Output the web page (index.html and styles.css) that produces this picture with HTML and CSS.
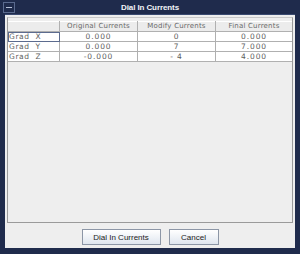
FILE: index.html
```html
<html>
<head>
	<title>Dial In Currents</title>
<link rel="stylesheet" href="styles.css">
</head>
<body>

	<div class="window">
		<div class="titlebar">
			<div class="closebox"><span></span></div>
			<div class="title">Dial In Currents</div>
		</div>

		<div class="content">
			<div class="panel">
				<table class="grid">
					<tr class="head">
						<th class="c0"></th>
						<th class="c1">Original Currents</th>
						<th class="c2">Modify Currents</th>
						<th class="c3">Final Currents</th>
					</tr>
					<tr>
						<td class="name focus">Grad&nbsp; X</td>
						<td>0.000</td>
						<td>0</td>
						<td>0.000</td>
					</tr>
					<tr>
						<td class="name">Grad&nbsp; Y</td>
						<td>0.000</td>
						<td>7</td>
						<td>7.000</td>
					</tr>
					<tr>
						<td class="name">Grad&nbsp; Z</td>
						<td>-0.000</td>
						<td>- 4</td>
						<td>4.000</td>
					</tr>
				</table>
			</div>

			<div class="buttons">
				<button class="dial">Dial In Currents</button>
				<button class="cancel">Cancel</button>
			</div>
		</div>
	</div>

</body>
</html>
```

FILE: styles.css
```css
body {
	margin: 0;
	font-family: "DejaVu Sans", sans-serif;
	background: #1e2a4a;
}

.window {
	width: 300px;
	height: 254px;
	box-sizing: border-box;
	background: #1f2b4c;
	padding: 0 5px 6px 5px;
	display: flex;
	flex-direction: column;
}

.titlebar {
	height: 14px;
	position: relative;
	display: flex;
	align-items: center;
	justify-content: center;
	border-bottom: 1px solid #3a4a70;
}

.closebox {
	position: absolute;
	left: -2px;
	top: 2px;
	width: 10px;
	height: 9px;
	border: 1px solid #5a6a8e;
	display: flex;
	align-items: center;
	justify-content: center;
}

.closebox span {
	display: block;
	width: 6px;
	height: 1px;
	background: #b8c2d8;
}

.title {
	color: #f2f4f8;
	font-family: "Liberation Sans", sans-serif;
	font-weight: bold;
	font-size: 8px;
	letter-spacing: -0.1px;
}

.content {
	flex: 1;
	background: #eeeeee;
	display: flex;
	flex-direction: column;
	padding: 2px 2px 0 2px;
}

.panel {
	height: 206px;
	border: 1px solid #9a9a9a;
	border-top-color: #c8c8c8;
	background: #eeeeee;
	padding-top: 3px;
	box-sizing: border-box;
}

.grid {
	border-collapse: collapse;
	width: 100%;
	table-layout: fixed;
	font-size: 7.5px;
	color: #5e5e5e;
	font-family: "DejaVu Sans", sans-serif;
	letter-spacing: 0.9px;
}

.grid th, .grid td {
	height: 9px;
	padding: 0;
	line-height: 9px;
	border: 1px solid #b0b0b0;
	text-align: center;
	font-weight: normal;
	white-space: nowrap;
	overflow: hidden;
}

.grid tr:first-child th {
	border-top: 1px solid #ffffff;
}

.grid th:first-child, .grid td:first-child {
	border-left: none;
}

.grid th:last-child, .grid td:last-child {
	border-right: none;
}

.head th {
	background: #ececec;
	color: #6a6a6a;
	font-size: 7px;
	letter-spacing: 0.2px;
	border-left-color: #d0d0d0;
}

.grid td {
	background: #ffffff;
}

.c0 { width: 51px; }
.c1 { width: 77px; }
.c2 { width: 77px; }

.grid td.name {
	text-align: left;
	padding-left: 1px;
	letter-spacing: 0.6px;
}

.grid td.focus {
	outline: 1px solid #5c6b8e;
	outline-offset: -1px;
}

.buttons {
	flex: 1;
	display: flex;
	align-items: center;
	justify-content: center;
	gap: 8px;
	padding-top: 3px;
}

button {
	font-family: "Liberation Sans", sans-serif;
	font-size: 8px;
	color: #222;
	height: 16px;
	border: 1px solid #8c96a6;
	background: linear-gradient(#ffffff, #dfe6ef);
	padding: 0;
}

.dial { width: 79px; }
.cancel { width: 50px; }
```
